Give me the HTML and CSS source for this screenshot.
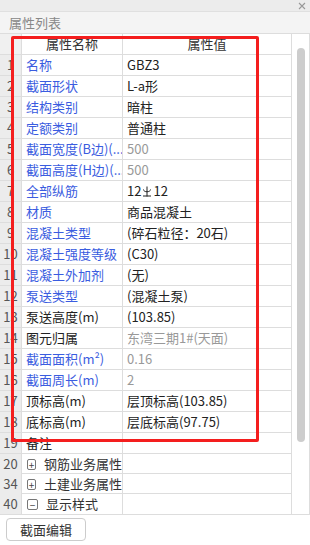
FILE: index.html
```html
<!DOCTYPE html>
<html lang="zh">
<head>
    <meta charset="UTF-8">
    <title>属性列表</title>
    <link rel="stylesheet" href="styles.css">
</head>
<body>
    <div class="panel">
        <div class="topbar">
            <svg class="close" width="8" height="8" viewBox="0 0 8 8"><path d="M1 1L7 7M7 1L1 7" stroke="#999" stroke-width="1.1" fill="none"/></svg>
        </div>
        <div class="title">属性列表</div>

        <div class="grid-wrap">
            <div class="grid">
                <div class="row head">
                    <div class="num"></div>
                    <div class="name">属性名称</div>
                    <div class="val">属性值</div>
                </div>
                <div class="row"><div class="num">1</div><div class="name blue">名称</div><div class="val">GBZ3</div></div>
                <div class="row"><div class="num">2</div><div class="name blue">截面形状</div><div class="val">L-a形</div></div>
                <div class="row"><div class="num">3</div><div class="name blue">结构类别</div><div class="val">暗柱</div></div>
                <div class="row"><div class="num">4</div><div class="name blue">定额类别</div><div class="val">普通柱</div></div>
                <div class="row"><div class="num">5</div><div class="name blue">截面宽度(B边)(...</div><div class="val gray">500</div></div>
                <div class="row"><div class="num">6</div><div class="name blue">截面高度(H边)(...</div><div class="val gray">500</div></div>
                <div class="row"><div class="num">7</div><div class="name blue">全部纵筋</div><div class="val">12<svg class="rebar" width="10" height="11" viewBox="0 0 10 11"><path d="M5 0.5V10.5M1.5 3.5C1.5 6.5 8.5 6.5 8.5 3.5M1 10H9" stroke="#222" stroke-width="1" fill="none"/></svg>12</div></div>
                <div class="row"><div class="num">8</div><div class="name blue">材质</div><div class="val">商品混凝土</div></div>
                <div class="row"><div class="num">9</div><div class="name blue">混凝土类型</div><div class="val">(碎石粒径：20石)</div></div>
                <div class="row"><div class="num">10</div><div class="name blue">混凝土强度等级</div><div class="val">(C30)</div></div>
                <div class="row"><div class="num">11</div><div class="name blue">混凝土外加剂</div><div class="val">(无)</div></div>
                <div class="row"><div class="num">12</div><div class="name blue">泵送类型</div><div class="val">(混凝土泵)</div></div>
                <div class="row"><div class="num">13</div><div class="name">泵送高度(m)</div><div class="val">(103.85)</div></div>
                <div class="row"><div class="num">14</div><div class="name">图元归属</div><div class="val gray">东湾三期1#(天面)</div></div>
                <div class="row"><div class="num">15</div><div class="name blue">截面面积(m²)</div><div class="val gray">0.16</div></div>
                <div class="row"><div class="num">16</div><div class="name blue">截面周长(m)</div><div class="val gray">2</div></div>
                <div class="row"><div class="num">17</div><div class="name">顶标高(m)</div><div class="val">层顶标高(103.85)</div></div>
                <div class="row"><div class="num">18</div><div class="name">底标高(m)</div><div class="val">层底标高(97.75)</div></div>
                <div class="row"><div class="num">19</div><div class="name">备注</div><div class="val"></div></div>
                <div class="row short"><div class="num">20</div><div class="name group"><span class="box">+</span>钢筋业务属性</div><div class="val"></div></div>
                <div class="row short"><div class="num">34</div><div class="name group"><span class="box">+</span>土建业务属性</div><div class="val"></div></div>
                <div class="row short"><div class="num">40</div><div class="name group"><span class="box">−</span>显示样式</div><div class="val"></div></div>
            </div>
            <div class="scroll"><div class="thumb"></div></div>
            <div class="mark"></div>
        </div>

        <div class="footer">
            <button class="btn">截面编辑</button>
        </div>
    </div>
</body>
</html>
```

FILE: styles.css
```css
body {
    margin: 0;
    font-family: "Noto Sans CJK SC", "Noto Sans", sans-serif;
    font-size: 13px;
    color: #222;
    background-color: #fff;
}

.panel {
    width: 310px;
    height: 545px;
    display: flex;
    flex-direction: column;
}

.topbar {
    height: 11px;
    background-color: #ececec;
    border-bottom: 1px solid #e0e0e0;
    display: flex;
    justify-content: flex-end;
    align-items: center;
    padding-right: 4px;
}

.close {
    display: block;
}

.title {
    height: 21px;
    line-height: 21px;
    padding-left: 9px;
    background-color: #f4f4f4;
    color: #888;
    font-size: 13px;
}

.grid-wrap {
    position: relative;
    display: flex;
    border-top: 1px solid #ddd;
    border-bottom: 1px solid #ddd;
}

.grid {
    width: 292px;
    border-right: 1px solid #ddd;
}

.row {
    display: grid;
    grid-template-columns: 22px 101px 1fr;
    height: 21px;
    border-bottom: 1px solid #ddd;
    box-sizing: border-box;
    line-height: 20px;
    white-space: nowrap;
}

.row:last-child {
    border-bottom: none;
}

.row.short {
    height: 20px;
}

.num {
    background-color: #ececec;
    color: #555;
    text-align: center;
    border-right: 1px solid #ddd;
    font-size: 13px;
}

.name {
    padding-left: 4px;
    border-right: 1px solid #ddd;
    overflow: hidden;
}

.val {
    padding-left: 4px;
    overflow: hidden;
}

.head .name,
.head .val {
    text-align: center;
    padding-left: 0;
    color: #333;
}

.head .num {
    background-color: #f0f0f0;
}

.blue {
    color: #3a5ce0;
}

.gray {
    color: #999;
}

.rebar {
    margin: 0 1px;
    vertical-align: -1px;
}

.group {
    display: flex;
    align-items: center;
    color: #333;
}

.box {
    display: inline-flex;
    align-items: center;
    justify-content: center;
    width: 9px;
    height: 9px;
    border: 1px solid #777;
    border-radius: 2px;
    font-size: 10px;
    line-height: 9px;
    color: #444;
    margin-right: 8px;
    margin-left: 1px;
}

.scroll {
    width: 17px;
    border-right: 1px solid #ddd;
    padding-top: 14px;
    display: flex;
    justify-content: center;
}

.thumb {
    width: 8px;
    height: 394px;
    background-color: #cdcdcd;
    border-radius: 4px;
    margin-left: 1px;
}

.mark {
    position: absolute;
    left: 11px;
    top: 2px;
    width: 242px;
    height: 400px;
    border: 3px solid #f41e1e;
    border-radius: 2px;
}

.footer {
    padding: 3px 6px;
}

.btn {
    width: 80px;
    height: 23px;
    background-color: #fff;
    border: 1px solid #ccc;
    border-radius: 4px;
    font-family: "Noto Sans CJK SC", sans-serif;
    font-size: 13px;
    color: #333;
}
```
